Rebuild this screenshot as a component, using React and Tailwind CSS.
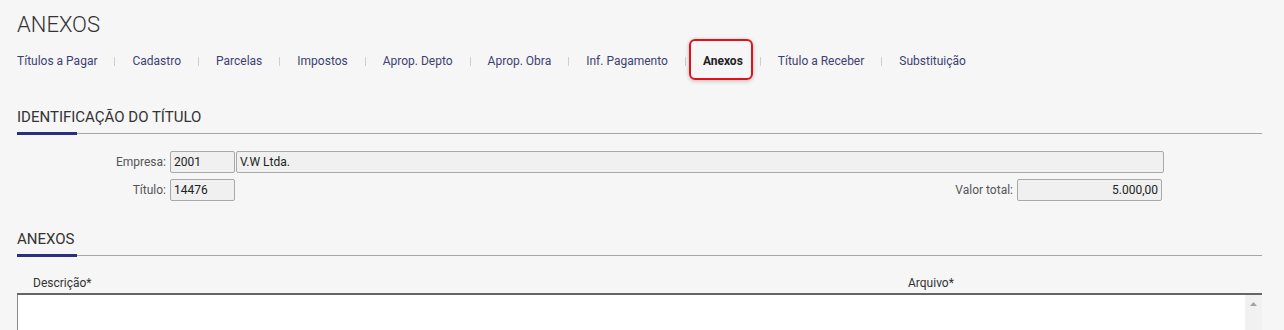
import React from 'react';

const tabs = [
  'Títulos a Pagar',
  'Cadastro',
  'Parcelas',
  'Impostos',
  'Aprop. Depto',
  'Aprop. Obra',
  'Inf. Pagamento',
  'Anexos',
  'Título a Receber',
  'Substituição',
];

function SectionTitle({ children, className = '' }) {
  return (
    <div className={className}>
      <h2 className="text-[15px] leading-5 text-[#333] font-normal">{children}</h2>
      <div className="flex items-center mt-[5px]">
        <div className="w-[60px] h-[3px] bg-[#2b2f7f]" />
        <div className="flex-1 h-px bg-[#a6a6a6]" />
      </div>
    </div>
  );
}

function Field({ value, className = '', align = 'left' }) {
  return (
    <div
      className={
        'h-[22px] border border-[#a9a9a9] rounded-[2px] bg-[#f0f0f0] px-[3px] text-[12px] leading-[20px] text-[#222] truncate ' +
        (align === 'right' ? 'text-right ' : '') +
        className
      }
    >
      {value}
    </div>
  );
}

export default function App() {
  return (
    <div className="min-h-screen bg-[#f6f6f6] font-[Roboto,Arial,sans-serif] pl-[17px] pr-[22px]">
      {/* Page title */}
      <h1 className="pt-[12px] text-[22px] leading-[26px] font-light text-[#333]">ANEXOS</h1>

      {/* Tabs */}
      <nav className="flex items-center mt-[15px] text-[12px] leading-4 text-[#3d3f73]">
        {tabs.map((t, i) => (
          <React.Fragment key={t}>
            {i > 0 && <span className="mx-[17px] w-px h-[9px] bg-[#cfcfcf]" />}
            {t === 'Anexos' ? (
              <span className="relative font-bold text-[#222]">
                {t}
                <span className="absolute -left-[14px] -right-[10px] -top-[14px] -bottom-[11px] border-2 border-[#e3101a] rounded-[6px] shadow-[0_1px_4px_rgba(0,0,0,0.25)]" />
              </span>
            ) : (
              <span>{t}</span>
            )}
          </React.Fragment>
        ))}
      </nav>

      {/* Identificação do título */}
      <SectionTitle className="mt-[38px]">IDENTIFICAÇÃO DO TÍTULO</SectionTitle>

      <div className="mt-[16px] mr-[98px] flex flex-col gap-[6px] text-[12px]">
        <div className="flex items-center">
          <label className="w-[153px] pr-1 text-right text-[#555]">Empresa:</label>
          <Field value="2001" className="w-[65px]" />
          <Field value="V.W Ltda." className="flex-1 ml-px" />
        </div>
        <div className="flex items-center">
          <label className="w-[153px] pr-1 text-right text-[#555]">Título:</label>
          <Field value="14476" className="w-[65px]" />
          <div className="flex-1" />
          <label className="pr-1 text-[#555]">Valor total:</label>
          <Field value="5.000,00" align="right" className="w-[145px] mr-[2px]" />
        </div>
      </div>

      {/* Anexos */}
      <SectionTitle className="mt-[28px]">ANEXOS</SectionTitle>

      <div className="grid grid-cols-[875px_1fr] mt-[18px] text-[12px] leading-4 text-[#333]">
        <div className="pl-[16px]">Descrição*</div>
        <div className="pl-[16px]">Arquivo*</div>
      </div>

      <div className="mt-[2px] border-t-2 border-[#666] flex h-[80px]">
        <div className="flex-1 bg-white border-l border-[#8a8a8a]" />
        <div className="w-[17px] bg-[#f1f1f1] flex justify-center pt-[7px]">
          <svg width="7" height="4" viewBox="0 0 7 4">
            <path d="M3.5 0 L7 4 L0 4 Z" fill="#a3a3a3" />
          </svg>
        </div>
      </div>
    </div>
  );
}
